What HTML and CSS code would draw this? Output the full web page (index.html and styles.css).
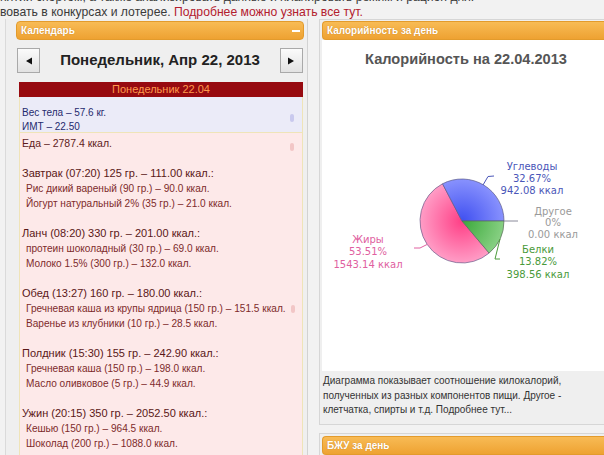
FILE: index.html
```html
<!DOCTYPE html>
<html lang="ru">
<head>
<meta charset="utf-8">
<title>Дневник</title>
<link rel="stylesheet" href="styles.css">
</head>
<body>
<div class="intro">
  <p>нятии спортом, а также анализировать данные и планировать режим и рацион дня.</p>
  <p>вовать в конкурсах и лотерее. <a href="#" class="more">Подробнее можно узнать все тут.</a></p>
</div>
<div class="cols">
  <div class="col col-left">
    <div class="widget-head"><span>Календарь</span><i class="minus"></i></div>
    <div class="nav">
      <button class="nav-btn"><svg width="8" height="8" viewBox="0 0 8 8"><path d="M1 4 L7 0.5 L7 7.5 Z" fill="#111"/></svg></button>
      <div class="nav-title">Понедельник, Апр 22, 2013</div>
      <button class="nav-btn"><svg width="8" height="8" viewBox="0 0 8 8"><path d="M7 4 L1 0.5 L1 7.5 Z" fill="#111"/></svg></button>
    </div>
    <div class="day-bar">Понедельник 22.04</div>
    <div class="box box-body">
      <div>Вес тела – 57.6 кг.</div>
      <div>ИМТ – 22.50</div>
      <i class="mark mark-blue"></i>
    </div>
    <div class="box box-food">
      <div class="food-total">Еда – 2787.4 ккал.</div>
      <i class="mark mark-pink"></i>
      <div class="meal">
        <div class="meal-head">Завтрак (07:20) 125 гр. – 111.00 ккал.:</div>
        <div class="item">Рис дикий вареный (90 гр.) – 90.0 ккал.</div>
        <div class="item">Йогурт натуральный 2% (35 гр.) – 21.0 ккал.</div>
      </div>
      <div class="meal">
        <div class="meal-head">Ланч (08:20) 330 гр. – 201.00 ккал.:</div>
        <div class="item">протеин шоколадный (30 гр.) – 69.0 ккал.</div>
        <div class="item">Молоко 1.5% (300 гр.) – 132.0 ккал.</div>
      </div>
      <div class="meal">
        <div class="meal-head">Обед (13:27) 160 гр. – 180.00 ккал.:</div>
        <div class="item item-marked">Гречневая каша из крупы ядрица (150 гр.) – 151.5 ккал.<i class="mark mark-pink mark-inline"></i></div>
        <div class="item">Варенье из клубники (10 гр.) – 28.5 ккал.</div>
      </div>
      <div class="meal">
        <div class="meal-head">Полдник (15:30) 155 гр. – 242.90 ккал.:</div>
        <div class="item">Гречневая каша (150 гр.) – 198.0 ккал.</div>
        <div class="item">Масло оливковое (5 гр.) – 44.9 ккал.</div>
      </div>
      <div class="meal">
        <div class="meal-head">Ужин (20:15) 350 гр. – 2052.50 ккал.:</div>
        <div class="item">Кешью (150 гр.) – 964.5 ккал.</div>
        <div class="item">Шоколад (200 гр.) – 1088.0 ккал.</div>
      </div>
    </div>
  </div>
  <div class="col col-right">
    <div class="widget">
      <div class="widget-head"><span>Калорийность за день</span><i class="minus"></i></div>
      <div class="chart">
        <svg class="pie" width="290" height="331" viewBox="0 0 290 331">
          <defs>
            <radialGradient id="gBlue" gradientUnits="userSpaceOnUse" cx="140" cy="181" r="46">
              <stop offset="0" stop-color="#3f4ff0"/>
              <stop offset="1" stop-color="#8f98ff"/>
            </radialGradient>
            <radialGradient id="gPink" gradientUnits="userSpaceOnUse" cx="140" cy="181" r="46">
              <stop offset="0" stop-color="#ff3f86"/>
              <stop offset="1" stop-color="#ffa6cc"/>
            </radialGradient>
            <radialGradient id="gGreen" gradientUnits="userSpaceOnUse" cx="140" cy="181" r="46">
              <stop offset="0" stop-color="#3aa83a"/>
              <stop offset="1" stop-color="#8fd48a"/>
            </radialGradient>
          </defs>
          <text class="chart-title" x="144" y="24" text-anchor="middle">Калорийность на 22.04.2013</text>
          <path d="M140 181 L167.14 213.06 A42 42 0 1 1 120.54 143.78 Z" fill="url(#gPink)" stroke="#6a5a8a" stroke-width="0.7"/>
          <path d="M140 181 L120.54 143.78 A42 42 0 0 1 182 181 Z" fill="url(#gBlue)" stroke="#5a5a8a" stroke-width="0.7"/>
          <path d="M140 181 L182 181 A42 42 0 0 1 167.14 213.06 Z" fill="url(#gGreen)" stroke="#5a6a5a" stroke-width="0.7"/>
          <polyline points="172,136 166,136.5 161,145" fill="none" stroke="#4a56b8" stroke-width="1"/>
          <line x1="182" y1="181" x2="196" y2="181" stroke="#8a8a9a" stroke-width="1"/>
          <polyline points="178,199 173,219 178,219" fill="none" stroke="#4a9a3a" stroke-width="1"/>
          <polyline points="92,208 98,208 105,204.5" fill="none" stroke="#e060a0" stroke-width="1"/>
          <g class="lbl lbl-blue" text-anchor="middle">
            <text x="210" y="130">Углеводы</text>
            <text x="210" y="142">32.67%</text>
            <text x="210" y="154">942.08 ккал</text>
          </g>
          <g class="lbl lbl-gray" text-anchor="middle">
            <text x="231" y="175">Другое</text>
            <text x="231" y="186">0%</text>
            <text x="231" y="198">0.00 ккал</text>
          </g>
          <g class="lbl lbl-green" text-anchor="middle">
            <text x="216" y="213">Белки</text>
            <text x="216" y="225">13.82%</text>
            <text x="216" y="238">398.56 ккал</text>
          </g>
          <g class="lbl lbl-pink" text-anchor="middle">
            <text x="46" y="203">Жиры</text>
            <text x="46" y="215">53.51%</text>
            <text x="46" y="228">1543.14 ккал</text>
          </g>
        </svg>
      </div>
      <div class="chart-note">Диаграмма показывает соотношение килокалорий, полученных из разных компонентов пищи. Другое - клетчатка, спирты и т.д. Подробнее тут...</div>
    </div>
    <div class="widget widget-next">
      <div class="widget-head"><span>БЖУ за день</span><i class="minus"></i></div>
    </div>
  </div>
</div>
</body>
</html>
```

FILE: styles.css
```css
html, body {
  margin: 0;
  padding: 0;
}
body {
  width: 604px;
  height: 455px;
  overflow: hidden;
  background: #f2f2f2;
  font-family: "Liberation Sans", Arial, sans-serif;
  color: #333;
}
.intro {
  margin-top: -10px;
  font-size: 12.2px;
  line-height: 15px;
  color: #3a3a3a;
}
.intro p {
  margin: 0;
  white-space: nowrap;
}
.more {
  color: #b3202e;
  text-decoration: none;
}
.cols {
  display: flex;
  align-items: flex-start;
  gap: 11px;
  margin-top: -1px;
}
.col {
  box-sizing: border-box;
  flex: none;
}
.col-left {
  margin-left: 5px;
  width: 303px;
  height: 460px;
  border-left: 1px solid #dadada;
  border-right: 1px solid #d2d2d2;
  padding: 2px 3px 0 10px;
  background: #efefef;
}
.col-right {
  width: 300px;
}
.widget {
  border: 1px solid #d6d6d6;
  border-right: none;
  padding: 1px 0 0 2px;
  background: #efefef;
}
.widget-next {
  margin-top: 8px;
  padding-top: 2px;
}
.widget-head {
  display: flex;
  align-items: center;
  justify-content: space-between;
  height: 19px;
  padding: 0 3px 0 4px;
  border-radius: 4px;
  border: 1px solid #e39b2c;
  box-sizing: border-box;
  background: linear-gradient(#f8bb55, #eea232);
  color: #fff;
  font-weight: bold;
  font-size: 10px;
  text-shadow: 0 0 1px rgba(150, 80, 0, 0.5);
}
.col-right .widget-head {
  border-right: none;
  border-radius: 4px 0 0 4px;
}
.minus {
  display: block;
  width: 8px;
  height: 2px;
  background: #fff;
  margin-top: 1px;
}
.nav {
  display: flex;
  align-items: center;
  justify-content: space-between;
  margin: 8px 1px 0 1px;
  height: 25px;
}
.nav-btn {
  box-sizing: border-box;
  width: 23px;
  height: 25px;
  padding: 0;
  border: 1px solid #a9a9a9;
  background: linear-gradient(#fbfbfb, #e2e2e2);
  display: flex;
  align-items: center;
  justify-content: center;
}
.nav-btn svg {
  display: block;
}
.nav-title {
  font-size: 15px;
  font-weight: bold;
  color: #222;
  margin-top: -3px;
}
.day-bar {
  margin: 9px 1px 0 3px;
  height: 15px;
  line-height: 15px;
  text-align: center;
  background: #970a10;
  color: #ff9a4c;
  font-size: 11px;
}
.box {
  position: relative;
  margin: 0 1px 0 3px;
  border: 1px solid #efe4b8;
  font-size: 10px;
}
.box-body {
  height: 36px;
  box-sizing: border-box;
  background: #ebebf8;
  color: #1f2a6e;
  line-height: 14px;
  padding: 9px 0 0 2px;
  border-top: none;
}
.box-food {
  background: #fde9e9;
  color: #5e1b1b;
  padding: 3px 0 20px 2px;
  line-height: 15px;
  border-top: none;
}
.food-total {
  font-size: 10.5px;
}
.meal {
  margin-top: 15px;
}
.meal-head {
  font-size: 11px;
  color: #5a1717;
}
.item {
  padding-left: 4px;
  color: #7e2b2b;
  font-size: 10.1px;
}
.item-marked {
  position: relative;
}
.mark {
  position: absolute;
  width: 4px;
  height: 8px;
  border-radius: 2px;
  right: 8px;
}
.mark-blue {
  top: 17px;
  background: #c9c9ee;
}
.mark-pink {
  top: 10px;
  background: #f2c6c6;
}
.mark-inline {
  top: 4px;
  right: 7px;
}
.chart {
  background: #fff;
  height: 331px;
}
.pie {
  display: block;
}
.chart-title {
  font-family: "Liberation Sans", Arial, sans-serif;
  font-weight: bold;
  font-size: 14.6px;
  fill: #555;
}
.lbl text {
  font-family: "DejaVu Sans", Verdana, sans-serif;
  font-size: 10px;
}
.lbl-blue text { fill: #4a56b8; }
.lbl-gray text { fill: #9a9a9a; }
.lbl-green text { fill: #4a9a3a; }
.lbl-pink text { fill: #e060a0; }
.chart-note {
  font-size: 10px;
  line-height: 14.5px;
  color: #333;
  padding: 3px 20px 6px 1px;
}
```
